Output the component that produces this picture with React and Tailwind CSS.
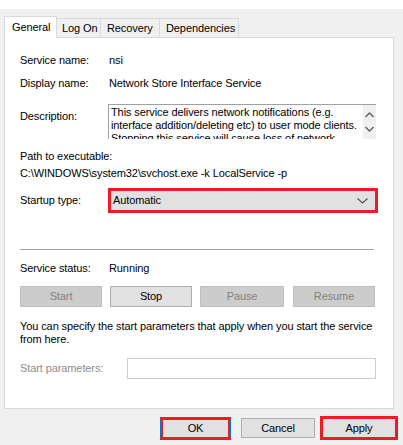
import React from "react";

function Btn({ children, disabled, className = "" }) {
  return (
    <div
      className={
        "flex items-center justify-center h-[21px] w-[82px] border " +
        (disabled
          ? "bg-[#cccccc] border-[#bfbfbf] text-[#838383] "
          : "bg-[#e1e1e1] border-[#adadad] text-black ") +
        className
      }
    >
      {children}
    </div>
  );
}

function Chevron({ up }) {
  return (
    <svg width="9" height="6" viewBox="0 0 9 6" className="block">
      <path
        d={up ? "M0.5 5 L4.5 1 L8.5 5" : "M0.5 1 L4.5 5 L8.5 1"}
        fill="none"
        stroke="#606060"
        strokeWidth="1.4"
      />
    </svg>
  );
}

export default function App() {
  return (
    <div
      className="w-[403px] h-[445px] bg-[#f0f0f0] overflow-hidden text-[11px] leading-[15px] tracking-[-0.1px] text-black"
      style={{ fontFamily: '"Liberation Sans", Arial, sans-serif' }}
    >
      <div className="h-[9px] bg-white" />
      {/* Tabs */}
      <div className="flex items-end h-[28px] pl-[4px]">
        <div className="relative z-10 w-[53px] h-[22px] -mb-[1px] pl-[7px] pt-[3px] bg-white border border-b-0 border-[#d9d9d9]">
          General
        </div>
        <div className="w-[44px] h-[19px] pl-[5px] pt-[2px] bg-[#f0f0f0] border border-l-0 border-b-0 border-[#d9d9d9]">
          Log On
        </div>
        <div className="w-[59px] h-[19px] pl-[6px] pt-[2px] bg-[#f0f0f0] border border-l-0 border-b-0 border-[#d9d9d9]">
          Recovery
        </div>
        <div className="w-[79px] h-[19px] pl-[6px] pt-[2px] bg-[#f0f0f0] border border-l-0 border-b-0 border-[#d9d9d9]">
          Dependencies
        </div>
      </div>
      {/* Panel */}
      <div className="ml-[4px] w-[390px] h-[372px] bg-white border border-[#d9d9d9] flex flex-col pl-[15px]">
        <div className="mt-[11px] h-[22px] flex items-center">
          <div className="w-[89px]">Service name:</div>
          <div>nsi</div>
        </div>
        <div className="mt-[1px] h-[22px] flex items-center">
          <div className="w-[89px]">Display name:</div>
          <div>Network Store Interface Service</div>
        </div>
        <div className="mt-[10px] h-[35px] flex">
          <div className="w-[88px] pt-[5px]">Description:</div>
          <div className="w-[268px] h-[35px] border-t border-l border-[#a0a0a0] flex overflow-hidden">
            <div className="flex-1 pl-[2px] pt-[1px] leading-[13px]">
              This service delivers network notifications (e.g. interface addition/deleting etc) to user mode clients. Stopping this service will cause loss of network
            </div>
            <div className="w-[13px] bg-[#f0f0f0] flex flex-col items-center pt-[7px] gap-[8px]">
              <Chevron up />
              <Chevron />
            </div>
          </div>
        </div>
        <div className="mt-[10px] h-[15px]">Path to executable:</div>
        <div className="mt-[2px] h-[15px]">
          C:\WINDOWS\system32\svchost.exe -k LocalService -p
        </div>
        <div className="mt-[7px] h-[25px] flex items-center">
          <div className="w-[88px]">Startup type:</div>
          <div className="w-[270px] h-[25px] border-[3px] border-[#ed1c24] bg-[#e1e1e1] flex items-center justify-between pl-[2px] pr-[7px]">
            <span>Automatic</span>
            <svg width="11" height="6" viewBox="0 0 11 6">
              <path d="M0.5 0.5 L5.5 5 L10.5 0.5" fill="none" stroke="#505050" strokeWidth="1.1" />
            </svg>
          </div>
        </div>
        <div className="mt-[36px] w-[354px] h-[1px] bg-[#a0a0a0]" />
        <div className="mt-[11px] h-[15px] flex items-center">
          <div className="w-[89px]">Service status:</div>
          <div>Running</div>
        </div>
        <div className="mt-[10px] flex gap-[8px]">
          <Btn disabled>Start</Btn>
          <Btn>Stop</Btn>
          <Btn disabled className="w-[84px]">Pause</Btn>
          <Btn disabled className="ml-[1px]">Resume</Btn>
        </div>
        <div className="mt-[13px] leading-[13px] w-[360px]">
          You can specify the start parameters that apply when you start the service from here.
        </div>
        <div className="mt-[12px] flex items-center h-[21px]">
          <div className="w-[107px] text-[#8d8d8d]">Start parameters:</div>
          <div className="w-[249px] h-[21px] border border-[#cccccc]" />
        </div>
      </div>
      {/* Bottom buttons */}
      <div className="flex mt-[7px] pl-[160px] items-center h-[24px]">
        <div className="w-[71px] h-[23px] border-[3px] border-[#ed1c24] bg-[#e1e1e1] flex items-center justify-center relative">
          <div className="absolute -left-[3px] top-0 bottom-0 w-[1px] bg-[#0078d7]" />
          <div className="absolute -right-[3px] top-0 bottom-0 w-[1px] bg-[#0078d7]" />
          OK
        </div>
        <div className="ml-[10px] w-[74px] h-[20px] border border-[#adadad] bg-[#e1e1e1] flex items-center justify-center">
          Cancel
        </div>
        <div className="ml-[5px] w-[78px] h-[24px] border-[3px] border-[#ed1c24] bg-[#e1e1e1] flex items-center justify-center">
          Apply
        </div>
      </div>
    </div>
  );
}
